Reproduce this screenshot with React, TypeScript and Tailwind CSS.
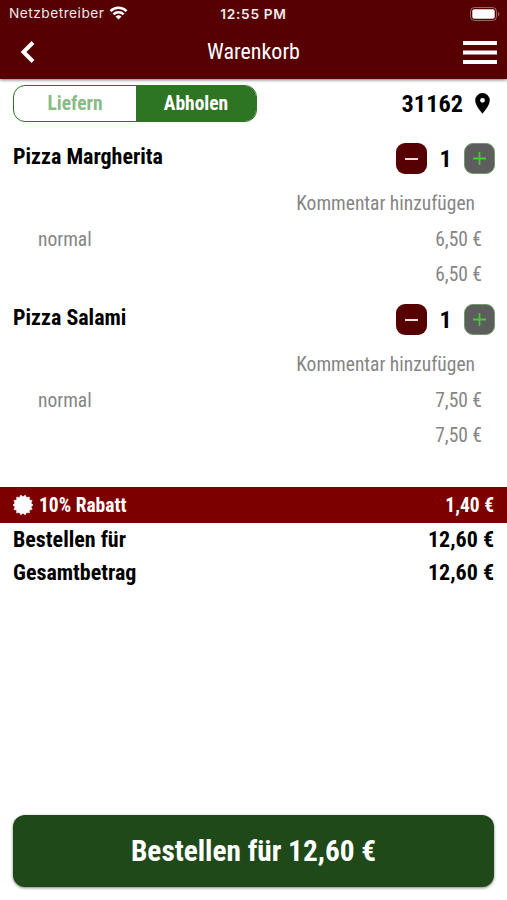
import React from 'react';

interface CartItem {
  name: string;
  quantity: number;
  variant: string;
  price: string;
}

const items: CartItem[] = [
  { name: 'Pizza Margherita', quantity: 1, variant: 'normal', price: '6,50 €' },
  { name: 'Pizza Salami', quantity: 1, variant: 'normal', price: '7,50 €' },
];

const StatusBar = () => (
  <div className="relative h-[27px] flex items-center justify-between pl-[9px] pr-[7px] font-[Inter,sans-serif] text-[13.7px] text-[#f3e9e9]">
    <div className="flex items-center gap-[5px]">
      <span className="tracking-[0.5px]">Netzbetreiber</span>
      <svg className="w-[19px] h-[14px]" viewBox="0 0 18 14" fill="none" stroke="#fff" strokeWidth="2.5">
        <path d="M1 5.1a11.4 11.4 0 0 1 16 0" />
        <path d="M3.9 8.4a7.2 7.2 0 0 1 10.2 0" />
        <path d="M9 13.6 6 10.6a4.3 4.3 0 0 1 6 0z" fill="#fff" stroke="none" />
      </svg>
    </div>
    <span className="absolute inset-x-0 pt-px text-center font-semibold tracking-[0.7px]">12:55 PM</span>
    <svg className="w-[30px] h-[14px]" viewBox="0 0 30 14">
      <rect x="0.5" y="0.5" width="26" height="13" rx="4" fill="none" stroke="#fff" strokeOpacity="0.4" />
      <rect x="2.3" y="2.3" width="22.4" height="9.4" rx="2" fill="#fff" />
      <path d="M28 4.8c2 .8 2 3.6 0 4.4z" fill="#fff" fillOpacity="0.4" />
    </svg>
  </div>
);

const Header = () => (
  <header className="h-[79px] bg-[#560002] text-white shadow-[0_1px_3px_rgba(0,0,0,0.55)]">
    <StatusBar />
    <div className="relative h-[50px] flex items-center justify-between pl-5 pr-[10px]">
      <svg className="w-[15px] h-[22px]" viewBox="0 0 15 22" fill="none" stroke="#fff" strokeWidth="4">
        <path d="M13 1.5 3.5 11 13 20.5" />
      </svg>
      <h1 className="absolute inset-x-0 text-center text-[22px] leading-[50px]">Warenkorb</h1>
      <svg className="w-[34px] h-[23px]" viewBox="0 0 34 23" fill="#fff">
        <path d="M0 0h34v4H0zM0 9.5h34v4H0zM0 19h34v4H0z" />
      </svg>
    </div>
  </header>
);

const DeliveryBar = () => (
  <div className="mt-[6px] flex items-center justify-between px-[13px]">
    <div className="w-[244px] h-[37px] flex rounded-[12px] border border-[#2d7423] overflow-hidden text-[19.5px] leading-[35px] font-bold text-center">
      <div className="w-[122px] text-[#8abb86]">Liefern</div>
      <div className="flex-1 bg-[#2d7423] text-white">Abholen</div>
    </div>
    <div className="flex items-center gap-[12px] pr-[4px] text-[24.3px] font-bold">
      <span className="pt-px">31162</span>
      <svg className="w-[15px] h-[21px]" viewBox="0 0 15 21" fill="#000" fillRule="evenodd">
        <path d="M7.5 0A7.3 7.3 0 0 0 .2 7.3C.2 12.8 7.5 20.7 7.5 20.7s7.3-7.9 7.3-13.4A7.3 7.3 0 0 0 7.5 0zm0 9.7a2.4 2.4 0 1 1 0-4.8 2.4 2.4 0 0 1 0 4.8z" />
      </svg>
    </div>
  </div>
);

const Stepper = ({ quantity }: { quantity: number }) => (
  <div className="flex items-center h-[31px] mt-[3px] -mr-px">
    <div className="w-[31px] h-[31px] rounded-[9px] bg-[#560002] flex items-center justify-center">
      <span className="w-[13px] h-[2px] bg-[#f5dede]" />
    </div>
    <span className="w-[37px] text-center text-[24px] font-bold">{quantity}</span>
    <div className="w-[31px] h-[31px] rounded-[9px] bg-[#5d5d5d] border border-[#6f9a69] flex items-center justify-center">
      <svg className="w-[13px] h-[13px]" viewBox="0 0 13 13" stroke="#4cc53e" strokeWidth="1.8">
        <path d="M6.5 0v13M0 6.5h13" />
      </svg>
    </div>
  </div>
);

const ItemRow = ({ item }: { item: CartItem }) => (
  <div className="h-[161px] px-[13px] text-[19.5px] text-[#858585]">
    <div className="h-[46px] flex justify-between items-start text-black">
      <span className="text-[22px] leading-[33px] font-bold">{item.name}</span>
      <Stepper quantity={item.quantity} />
    </div>
    <div className="h-[35px] pr-[19px] text-right leading-[35px]">Kommentar hinzufügen</div>
    <div className="h-[36px] pl-[25px] pr-3 flex justify-between leading-[37px]">
      <span>{item.variant}</span>
      <span>{item.price}</span>
    </div>
    <div className="h-[35px] pr-3 text-right leading-[35px]">{item.price}</div>
  </div>
);

// Burst in front of the discount label
const SPIKES = 14;
const burst = Array.from({ length: SPIKES * 2 }, (_, i) => {
  const r = i % 2 ? 8.2 : 10.2;
  const a = ((i + 1) * Math.PI) / SPIKES;
  return `${(10 + r * Math.sin(a)).toFixed(2)},${(10 - r * Math.cos(a)).toFixed(2)}`;
}).join(' ');

const Summary = () => (
  <div className="mt-[25px] font-bold">
    <div className="h-[36px] px-[13px] flex items-center leading-[37px] bg-[#7d0000] text-white text-[19.5px]">
      <svg className="w-5 h-5 mr-[6px]" viewBox="0 0 20 20" fill="#fff" stroke="#fff" strokeWidth="0.5" strokeLinejoin="round">
        <polygon points={burst} />
      </svg>
      <span className="pt-px">10% Rabatt</span>
      <span className="ml-auto pt-px">1,40 €</span>
    </div>
    <div className="px-[13px] text-[22px] leading-[33px]">
      <div className="flex justify-between">
        <span>Bestellen für</span>
        <span>12,60 €</span>
      </div>
      <div className="flex justify-between">
        <span>Gesamtbetrag</span>
        <span>12,60 €</span>
      </div>
    </div>
  </div>
);

const App = () => (
  <div className="h-[900px] w-full bg-white flex flex-col overflow-hidden whitespace-nowrap text-black font-['Roboto_Condensed',Roboto,sans-serif] [font-stretch:75%]">
    <Header />
    <DeliveryBar />
    <div className="mt-[18px]">
      {items.map((item) => (
        <ItemRow key={item.name} item={item} />
      ))}
    </div>
    <Summary />
    <button className="mt-auto mb-[13px] mx-[13px] pt-[2px] h-[72px] shrink-0 rounded-[12px] bg-[#1f4919] text-white text-[29.3px] font-bold shadow-[0_1px_3px_rgba(0,0,0,0.5)]">
      Bestellen für 12,60 €
    </button>
  </div>
);

export default App;
